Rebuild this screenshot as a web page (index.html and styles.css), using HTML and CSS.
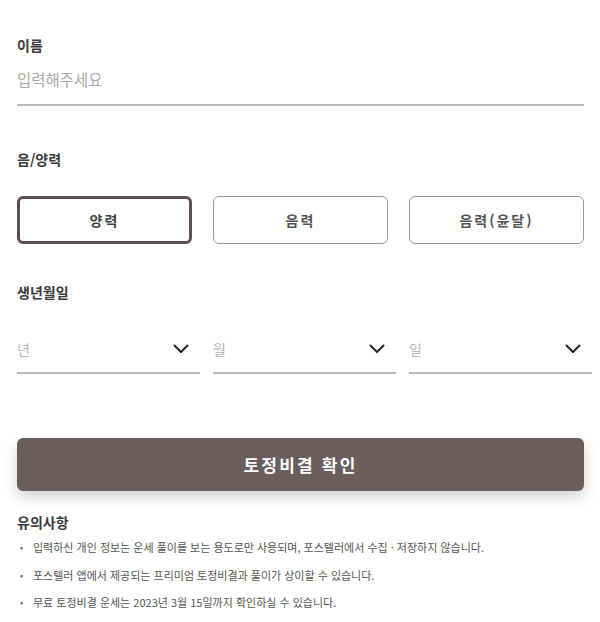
FILE: index.html
```html
<!DOCTYPE html>
<html lang="ko">
<head>
<meta charset="utf-8">
<link rel="stylesheet" href="styles.css">
</head>
<body>
<div class="page">
  <section class="field name-field">
    <div class="label">이름</div>
    <div class="text-input">입력해주세요</div>
  </section>

  <section class="field calendar-field">
    <div class="label">음/양력</div>
    <div class="choices">
      <div class="choice selected">양력</div>
      <div class="choice">음력</div>
      <div class="choice">음력(윤달)</div>
    </div>
  </section>

  <section class="field birth-field">
    <div class="label">생년월일</div>
    <div class="selects">
      <div class="select"><span>년</span><svg class="chev" viewBox="0 0 16 10" width="16" height="10"><path d="M1.5 1.5 L8 8 L14.5 1.5" fill="none" stroke="#222" stroke-width="2" stroke-linecap="round" stroke-linejoin="round"/></svg></div>
      <div class="select"><span>월</span><svg class="chev" viewBox="0 0 16 10" width="16" height="10"><path d="M1.5 1.5 L8 8 L14.5 1.5" fill="none" stroke="#222" stroke-width="2" stroke-linecap="round" stroke-linejoin="round"/></svg></div>
      <div class="select"><span>일</span><svg class="chev" viewBox="0 0 16 10" width="16" height="10"><path d="M1.5 1.5 L8 8 L14.5 1.5" fill="none" stroke="#222" stroke-width="2" stroke-linecap="round" stroke-linejoin="round"/></svg></div>
    </div>
  </section>

  <div class="submit">토정비결 확인</div>

  <section class="notice">
    <div class="label">유의사항</div>
    <ul>
      <li>입력하신 개인 정보는 운세 풀이를 보는 용도로만 사용되며, 포스텔러에서 수집 · 저장하지 않습니다.</li>
      <li>포스텔러 앱에서 제공되는 프리미엄 토정비결과 풀이가 상이할 수 있습니다.</li>
      <li>무료 토정비결 운세는 2023년 3월 15일까지 확인하실 수 있습니다.</li>
    </ul>
  </section>
</div>
</body>
</html>
```

FILE: styles.css
```css
html, body {
  margin: 0;
  padding: 0;
  background: #fff;
}
body {
  font-family: "Noto Sans CJK KR", "Noto Sans", sans-serif;
  color: #333;
}
.page {
  padding: 34px 16px 20px 17px;
}
.label {
  font-size: 14px;
  font-weight: 700;
  color: #3a3a3a;
  line-height: 22px;
}
.text-input {
  margin-top: 12px;
  font-size: 15.5px;
  line-height: 22px;
  color: #aaa;
  padding-bottom: 14px;
  border-bottom: 2px solid #bbb;
}
.calendar-field {
  margin-top: 42px;
}
.choices {
  margin-top: 26px;
  display: grid;
  grid-template-columns: 1fr 1fr 1fr;
  column-gap: 21px;
}
.choice {
  height: 48px;
  box-sizing: border-box;
  border: 1px solid #999;
  border-radius: 6px;
  display: flex;
  align-items: center;
  justify-content: center;
  font-size: 14px;
  font-weight: 700;
  letter-spacing: 2px;
  color: #555;
}
.choice.selected {
  border: 3px solid #5d5051;
  color: #444;
}
.birth-field {
  margin-top: 37px;
}
.selects {
  margin-top: 35px;
  margin-right: -8px;
  display: flex;
  gap: 13px;
}
.select {
  flex: 1;
  display: flex;
  align-items: center;
  justify-content: space-between;
  padding: 0 11px 12px 0;
  border-bottom: 2px solid #bbb;
  font-size: 14px;
  line-height: 22px;
  color: #b5b5b5;
}
.chev {
  display: block;
}
.submit {
  margin-top: 64px;
  height: 53px;
  border-radius: 6px;
  background: #6b5d5d;
  color: #fff;
  font-size: 17px;
  font-weight: 700;
  letter-spacing: 2.2px;
  display: flex;
  align-items: center;
  justify-content: center;
  box-shadow: 0 6px 14px rgba(0,0,0,0.18);
}
.notice {
  margin-top: 20px;
}
.notice ul {
  list-style: none;
  margin: 1px 0 0;
  padding: 0;
}
.notice li {
  position: relative;
  padding-left: 16px;
  font-size: 11px;
  line-height: 27.5px;
  color: #555;
}
.notice li::before {
  content: "•";
  position: absolute;
  left: 3px;
  top: 0;
  color: #666;
  font-size: 9px;
}
```
